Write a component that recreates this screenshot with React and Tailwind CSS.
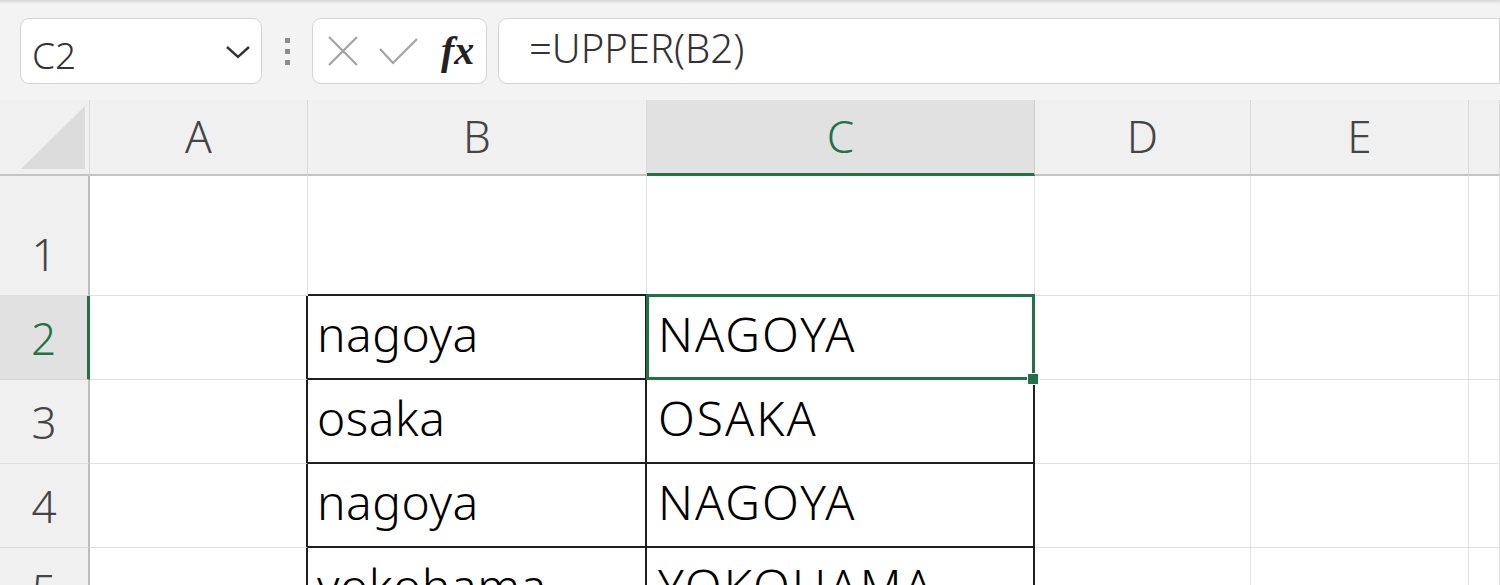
import React from 'react';

const headFont = { fontFamily: '"Noto Sans", "Open Sans", sans-serif' };
const cellFont = { fontFamily: '"Noto Sans", "Noto Sans CJK JP", sans-serif' };

const columns = ['A', 'B', 'C', 'D', 'E', ''];

// B列とC列の値（C列は =UPPER(B) の結果）
const rows = [
  { n: 1, b: '', c: '' },
  { n: 2, b: 'nagoya', c: 'NAGOYA' },
  { n: 3, b: 'osaka', c: 'OSAKA' },
  { n: 4, b: 'nagoya', c: 'NAGOYA' },
  { n: 5, b: 'yokohama', c: 'YOKOHAMA' },
];

const FormulaBar = () => (
  <div className="flex flex-col h-[100px] bg-[#f3f3f3]">
    <div className="h-[4px] bg-gradient-to-b from-[#d6d6d6] to-[#f3f3f3]" />
    <div className="flex items-stretch h-[66px] mt-[14px] pl-[20px]">
      <div className="w-[242px] flex items-center justify-between bg-white border border-[#d4d4d4] rounded-[9px] pl-[11px] pr-[10px]">
        <span className="text-[37px] font-light leading-none text-[#333] pt-[6px]" style={headFont}>C2</span>
        <svg width="26" height="14" viewBox="0 0 26 14" className="mt-[2px]">
          <path d="M2 2 L13 12 L24 2" fill="none" stroke="#333" strokeWidth="2.4" />
        </svg>
      </div>
      <div className="w-[50px] flex flex-col items-center justify-center gap-[6px]">
        <span className="w-[5px] h-[5px] bg-[#8c8c8c]" />
        <span className="w-[5px] h-[5px] bg-[#8c8c8c]" />
        <span className="w-[5px] h-[5px] bg-[#8c8c8c]" />
      </div>
      <div className="w-[175px] flex items-center bg-white border border-[#d4d4d4] rounded-[9px] pl-[14px]">
        <svg width="32" height="32" viewBox="0 0 32 32">
          <path d="M2 2 L30 30 M30 2 L2 30" fill="none" stroke="#a3a3a3" strokeWidth="2.2" />
        </svg>
        <svg width="40" height="28" viewBox="0 0 40 28" className="ml-[20px] mt-[2px]">
          <path d="M1 11 L14 25 L38 1" fill="none" stroke="#a3a3a3" strokeWidth="2.2" />
        </svg>
        <span className="ml-[22px] text-[40px] leading-none italic font-bold text-[#222]" style={{ fontFamily: '"Liberation Serif", "DejaVu Serif", serif' }}>fx</span>
      </div>
      <div className="flex-1 ml-[11px] flex items-center bg-white border border-[#d4d4d4] rounded-l-[9px] pl-[30px]">
        <span className="text-[40px] font-light leading-none text-[#333] -mt-[6px]" style={headFont}>=UPPER(B2)</span>
      </div>
    </div>
  </div>
);

const dataBorder = (row, col) => {
  // col: 0=A .. 5=F
  let r = 'border-r border-r-[#e1e1e1]';
  let b = 'border-b border-b-[#e1e1e1]';
  if (row >= 2 && (col === 0 || col === 1 || col === 2)) r = 'border-r-2 border-r-[#1f1f1f]';
  if (row >= 1 && (col === 1 || col === 2)) b = 'border-b-2 border-b-[#1f1f1f]';
  return `${r} ${b}`;
};

const Sheet = () => (
  <div className="grid grid-cols-[90px_218px_339px_388px_216px_218px_1fr] grid-rows-[76px_120px_84px_84px_84px_84px] bg-white">
    <div className="relative bg-[#f0f0f0] border-r border-r-[#dadada] border-b-2 border-b-[#c4c4c4] flex items-end justify-end pr-[4px] pb-[5px]">
      <svg width="64" height="63" viewBox="0 0 64 63">
        <polygon points="0,63 64,63 64,0" fill="#dcdcdc" />
      </svg>
    </div>
    {columns.map((c) => (
      <div
        key={c || 'F'}
        className={
          c === 'C'
            ? 'flex items-center justify-center bg-[#e1e1e1] border-r border-r-[#d0d0d0] border-b-[3px] border-b-[#217346] text-[#217346] text-[44px] font-light leading-none'
            : 'flex items-center justify-center bg-[#f0f0f0] border-r border-r-[#dadada] border-b-2 border-b-[#c4c4c4] text-[#444] text-[44px] font-light leading-none'
        }
        style={headFont}
      >
        <span className="pb-[2px]">{c}</span>
      </div>
    ))}
    {rows.map((row) => (
      <React.Fragment key={row.n}>
        <div
          className={
            row.n === 2
              ? 'flex items-end justify-center pb-[19px] bg-[#e1e1e1] border-r-[3px] border-r-[#217346] border-b border-b-[#d6d6d6] text-[#217346] text-[44px] font-light leading-none'
              : 'flex items-end justify-center pb-[19px] bg-[#f0f0f0] border-r-2 border-r-[#bdbdbd] border-b border-b-[#dcdcdc] text-[#444] text-[44px] font-light leading-none'
          }
          style={headFont}
        >
          {row.n}
        </div>
        {[0, 1, 2, 3, 4, 5].map((col) => (
          <div
            key={col}
            className={`relative flex items-end pl-[9px] pb-[20px] text-[48px] font-light leading-none text-black whitespace-nowrap ${dataBorder(row.n, col)}`}
            style={cellFont}
          >
            {col === 1 && <span className="tracking-[0.5px]">{row.b}</span>}
            {col === 2 && <span className="pl-[2px] tracking-[2px]">{row.c}</span>}
            {col === 2 && row.n === 2 && (
              <>
                <div className="absolute z-10 -left-[1px] -top-[2px] -right-[2px] -bottom-[2px] border-[3px] border-[#217346] pointer-events-none" />
                <div className="absolute z-20 -right-[6px] -bottom-[7px] w-[12px] h-[12px] bg-[#217346] border border-white" />
              </>
            )}
          </div>
        ))}
      </React.Fragment>
    ))}
  </div>
);

export default function App() {
  return (
    <div className="w-[1500px] h-[585px] overflow-hidden bg-[#f3f3f3]">
      <FormulaBar />
      <Sheet />
    </div>
  );
}
